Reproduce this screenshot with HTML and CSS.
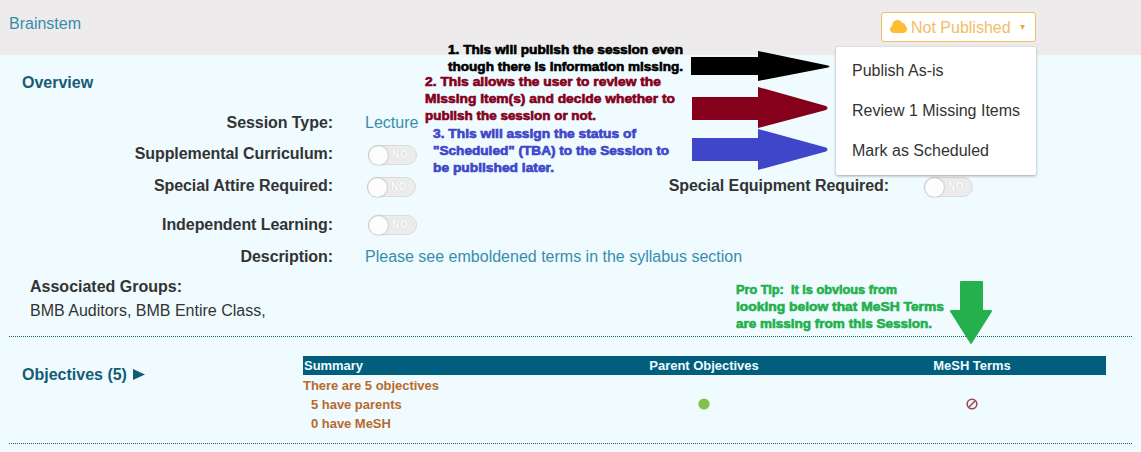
FILE: index.html
```html
<!DOCTYPE html>
<html lang="en">
<head>
<meta charset="utf-8">
<title>Brainstem</title>
<link rel="stylesheet" href="styles.css">
</head>
<body>
<div class="page">
  <header class="topbar">
    <a class="session-title">Brainstem</a>
    <div class="publish">
      <button class="publish-button">
        <svg class="cloud" viewBox="0 0 17 13" width="17" height="13"><path d="M4 13C1.700 13 0 11.500 0 9.300 0 7.600 1 6.300 2.400 5.700 2 2.500 4.300 0 7.400 0c2.200 0 4 1.200 4.700 3.100C14 2.500 15.500 3.800 15.100 5.800 16.400 6.400 17 7.700 17 9.200 17 11.400 15.300 13 13 13z"/></svg>
        <span>Not Published</span>
        <svg class="caret" viewBox="0 0 5 5" width="5" height="5"><path d="M0 0h5L2.500 5z"/></svg>
      </button>
      <div class="menu">
        <a>Publish As-is</a>
        <a>Review 1 Missing Items</a>
        <a>Mark as Scheduled</a>
      </div>
    </div>
  </header>

  <section class="overview">
    <h2 class="heading">Overview</h2>
    <div class="fields">
      <div class="row"><label class="label">Session Type:</label><span class="value">Lecture</span></div>
      <div class="row"><label class="label">Supplemental Curriculum:</label><span class="toggle"><i class="knob"></i>NO</span></div>
      <div class="row"><label class="label">Special Attire Required:</label><span class="toggle toggle-attire"><i class="knob"></i>NO</span>
        <label class="label label-equipment">Special Equipment Required:</label><span class="toggle"><i class="knob"></i>NO</span></div>
      <div class="row"><label class="label">Independent Learning:</label><span class="toggle"><i class="knob"></i>NO</span></div>
      <div class="row"><label class="label">Description:</label><span class="value">Please see emboldened terms in the syllabus section</span></div>
    </div>
    <div class="groups">
      <strong>Associated Groups:</strong>
      <span>BMB Auditors, BMB Entire Class,</span>
    </div>
  </section>

  <section class="objectives">
    <h2 class="heading objectives-heading">Objectives (5) <svg viewBox="0 0 12 11" width="12" height="11"><path d="M0 0l12 5.500L0 11z"/></svg></h2>
    <div class="summary">
      <div class="summary-head"><span>Summary</span><span class="center">Parent Objectives</span><span class="center">MeSH Terms</span></div>
      <div class="summary-body">
        <div class="counts"><span>There are 5 objectives</span><span class="sub">5 have parents</span><span class="sub">0 have MeSH</span></div>
        <div class="center"><svg width="12" height="12" viewBox="0 0 12 12"><circle cx="6" cy="6" r="5.600" fill="#84c14c"/></svg></div>
        <div class="center"><svg width="12" height="12" viewBox="0 0 12 12"><path d="M3 9L9 3" stroke="#9b4b50" stroke-width="1.600"/><circle cx="6" cy="6" r="4.800" fill="none" stroke="#9b4b50" stroke-width="1.600"/></svg></div>
      </div>
    </div>
  </section>

  <svg class="annotations" width="1141" height="452" viewBox="0 0 1141 452">
    <g class="note-black">
      <text x="448" y="54" textLength="235" lengthAdjust="spacingAndGlyphs">1. This will publish the session even</text>
      <text x="448" y="71" textLength="235" lengthAdjust="spacingAndGlyphs">though there is information missing.</text>
      <path d="M691 57h67v-6l70 14.500q3 1 0 2L758 81v-6h-67z"/>
    </g>
    <g class="note-red">
      <text x="425" y="86" textLength="236" lengthAdjust="spacingAndGlyphs">2. This allows the user to review the</text>
      <text x="425" y="103" textLength="250" lengthAdjust="spacingAndGlyphs">Missing Item(s) and decide whether to</text>
      <text x="425" y="120" textLength="171" lengthAdjust="spacingAndGlyphs">publish the session or not.</text>
      <path d="M692 97h66V87l68 19q3 2 0 4l-68 18v-8h-66z"/>
    </g>
    <g class="note-blue">
      <text x="433" y="138" textLength="203" lengthAdjust="spacingAndGlyphs">3. This will assign the status of</text>
      <text x="433" y="155" textLength="236" lengthAdjust="spacingAndGlyphs">"Scheduled" (TBA) to the Session to</text>
      <text x="433" y="172" textLength="121" lengthAdjust="spacingAndGlyphs">be published later.</text>
      <path d="M692 138h66v-9l68 18.500q3 2 0 4L758 170v-9h-66z"/>
    </g>
    <g class="note-green">
      <text x="736" y="294" textLength="161" lengthAdjust="spacingAndGlyphs" xml:space="preserve">Pro Tip:  It is obvious from</text>
      <text x="736" y="311" textLength="208" lengthAdjust="spacingAndGlyphs">looking below that MeSH Terms</text>
      <text x="736" y="328" textLength="196" lengthAdjust="spacingAndGlyphs">are missing from this Session.</text>
      <path d="M961 281h21q1 0 1 1v28h8q2 1 0 3l-19 30q-1 2-2 0l-19-30q-2-2 0-3h9v-28q0-1 1-1z"/>
    </g>
  </svg>
</div>
</body>
</html>
```
FILE: styles.css
```css
* { box-sizing: border-box; }
body { margin: 0; font-family: "Liberation Sans", Arial, sans-serif; font-size: 16px; line-height: 20px; color: #333; }
.page { position: relative; height: 452px; overflow: hidden; background: #effbff; }
.topbar { display: flex; justify-content: space-between; height: 55px; padding: 12px 105px 0 9px; background: #edebec; }
.session-title { padding-top: 2px; color: #388dab; }
.publish { position: relative; width: 155px; }
.publish-button { display: flex; align-items: center; width: 155px; height: 30px; padding: 0 9px 0 8px; border: 1px solid #edc161; border-radius: 3px; background: #fff; color: #f0bd68; font: inherit; white-space: nowrap; }
.publish-button span { padding-top: 1px; }
.cloud { margin: -1px 4px 0 0; fill: #fdbd35; }
.caret { margin: 1px 1px 0 auto; fill: #e5ad4c; }
.menu { position: absolute; z-index: 3; top: 35px; right: 0; display: flex; flex-direction: column; width: 200px; height: 128px; padding: 4px 0 0 16px; border-radius: 2px; background: #fff; box-shadow: 0 1px 3px rgba(0,0,0,.35); line-height: 40px; white-space: nowrap; }
.overview { height: 281px; padding-top: 18px; }
.heading { margin: 0 0 0 22px; color: #145c75; font-size: 16px; line-height: 20px; }
.fields { display: grid; grid-template-rows: 31px 32px 39px 32px 20px; padding-top: 20px; }
.row { display: flex; align-items: flex-start; }
.label { width: 333px; text-align: right; font-weight: bold; white-space: nowrap; letter-spacing: -.07px; }
.value { margin-left: 32px; color: #388dab; }
.toggle { display: flex; align-items: center; width: 49px; height: 20px; margin: 1px 0 0 35px; border: 1px solid #d9dcdd; border-radius: 10px; background: #ececed; color: #fff; font-size: 10px; font-weight: bold; text-shadow: 0 0 1px #bbb; letter-spacing: .5px; }
.knob { width: 19px; height: 19px; margin-right: 4px; border-radius: 50%; background: #fdfdfd; box-shadow: 0 0 2px #999; }
.row:nth-child(4) .toggle { margin-top: 0; }
.toggle-attire { margin-left: 34px; }
.label-equipment { width: 473px; }
.groups { display: flex; flex-direction: column; padding: 8px 0 0 30px; line-height: 24px; }
.objectives { display: flex; height: 108px; margin: 0 9px; border-top: 1px dotted #125f6c; border-bottom: 1px dotted #125f6c; }
.objectives-heading { width: 281px; margin: 28px 0 0 13px; }
.objectives-heading svg { margin-left: 2px; fill: #145c75; }
.summary { width: 803px; padding-top: 19px; font-size: 13px; font-weight: bold; line-height: 19px; letter-spacing: -.03px; }
.summary-head, .summary-body { display: grid; grid-template-columns: 267px 268px 268px; }
.summary-head { background: #015f7d; color: #effbff; }
.summary-head span:first-child { padding-left: 1px; }
.summary-body { align-items: center; padding-top: 1px; }
.counts { display: flex; flex-direction: column; color: #b96a2b; }
.sub { padding-left: 8px; }
.center { text-align: center; }
.summary-body svg { display: block; margin: -1px auto 0; }
.annotations { position: absolute; inset: 0; z-index: 2; font-family: "Liberation Sans", Arial, sans-serif; font-size: 12px; font-weight: bold; }
.annotations text { stroke: currentColor; stroke-width: .6px; }
.note-black { color: #000; fill: #000; }
.note-red { color: #85001b; fill: #85001b; }
.note-blue { color: #4046c9; fill: #4046c9; }
.note-green { color: #24b04d; fill: #24b04d; }
```
